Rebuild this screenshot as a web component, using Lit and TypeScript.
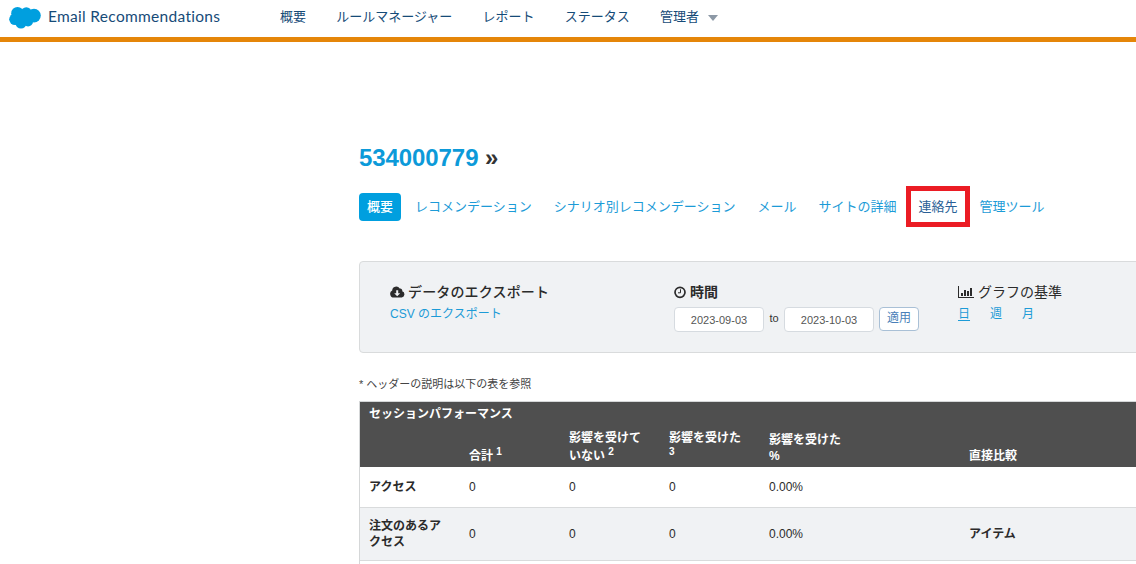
import { LitElement, html, css } from "lit";
import { customElement } from "lit/decorators.js";
import { classMap } from "lit/directives/class-map.js";

const NAV = ["概要", "ルールマネージャー", "レポート", "ステータス", "管理者"];
const TABS = [
  "概要",
  "レコメンデーション",
  "シナリオ別レコメンデーション",
  "メール",
  "サイトの詳細",
  "連絡先",
  "管理ツール",
];
const ROWS = [
  { label: ["アクセス"], compare: "" },
  { label: ["注文のあるア", "クセス"], compare: "アイテム" },
];

@customElement("app-header")
class AppHeader extends LitElement {
  static styles = css`
    :host { display: block; }
    .bar {
      display: flex;
      box-sizing: border-box;
      height: 42px;
      padding-left: 9px;
      border-bottom: 5px solid #e58609;
      background: #fff;
      color: #164b78;
      overflow: hidden;
    }
    .brand { display: flex; width: 271px; gap: 7px; }
    .logo { width: 32px; height: 23px; margin-top: 6px; flex: none; }
    .name {
      font: 15.5px/33px Lato, sans-serif;
      letter-spacing: 0.3px;
      white-space: nowrap;
    }
    .nav { display: flex; gap: 30.2px; font-size: 13px; line-height: 33px; }
    .item { display: flex; white-space: nowrap; }
    .caret { width: 10px; height: 6px; margin: 15px 0 0 9px; }
  `;
  render() {
    return html`<header class="bar">
      <div class="brand">
        <svg class="logo" viewBox="0 0 32 23" fill="#009fdf">
          <circle cx="8.5" cy="7.2" r="6.3" />
          <circle cx="17.3" cy="6.6" r="5.4" />
          <circle cx="25" cy="9.6" r="6.8" />
          <circle cx="6" cy="13.3" r="5.8" />
          <circle cx="12" cy="17" r="5.6" />
          <circle cx="19" cy="15.4" r="5" />
          <path d="M6 6h19v9H8z" />
        </svg>
        <span class="name">Email Recommendations</span>
      </div>
      <nav class="nav">
        ${NAV.map(
          (n, i) => html`<span class="item">${n}${i === NAV.length - 1
            ? html`<svg class="caret" viewBox="0 0 10 6"><path d="M0 0h10L5 6z" fill="#8d99a6" /></svg>`
            : ""}</span>`
        )}
      </nav>
    </header>`;
  }
}

@customElement("filter-panel")
class FilterPanel extends LitElement {
  static styles = css`
    :host { display: block; }
    .panel {
      display: grid;
      grid-template-columns: 284px 284px 284px;
      box-sizing: border-box;
      width: 915px;
      height: 92px;
      padding: 20px 30px 0;
      border: 1px solid #d9dbdc;
      border-radius: 4px;
      background: #f0f2f4;
    }
    .title {
      display: flex;
      align-items: center;
      height: 20px;
      font-size: 14px;
      line-height: 20px;
      font-weight: 500;
      color: #2b2b2b;
      white-space: nowrap;
    }
    .wide { letter-spacing: 0.15px; }
    .bold { font-weight: 700; }
    .light { font-weight: 400; }
    .icon { flex: none; height: 14px; }
    .cloud { width: 15px; margin-right: 3px; }
    .clock { width: 12px; margin-right: 4px; }
    .chart { width: 16px; margin-right: 4px; }
    .link { color: #1c9bd7; font-size: 12px; line-height: 24px; }
    .dates { display: flex; align-items: flex-start; padding-top: 5px; }
    .date {
      box-sizing: border-box;
      width: 90px;
      height: 25px;
      border: 1px solid #d6dbe0;
      border-radius: 4px;
      background: #fff;
      color: #555;
      font-size: 11px;
      line-height: 25px;
      text-align: center;
    }
    .to { width: 20px; text-align: center; font-size: 11px; line-height: 22px; color: #333; }
    .apply {
      box-sizing: border-box;
      width: 40px;
      height: 24px;
      margin-left: 5px;
      border: 1px solid #a9c0d6;
      border-radius: 4px;
      background: #fff;
      color: #4a7fb8;
      font-size: 12px;
      line-height: 20px;
      text-align: center;
    }
    .periods { display: flex; gap: 20px; }
    .current { text-decoration: underline; text-underline-offset: 2px; }
  `;
  render() {
    return html`<section class="panel">
      <div>
        <div class="title wide">
          <svg class="icon cloud" viewBox="0 0 15 14">
            <path
              fill="#2b2b2b"
              d="M3.8 12.5A3.7 3.7 0 0 1 2.2 5.5 4 4 0 0 1 9.7 3.6a2.1 2.1 0 0 1 2.5 2.7A3.2 3.2 0 0 1 11.8 12.5z"
            />
            <path fill="#f0f2f4" d="M6.2 5.2h2v3h2L7.2 11.2 4.2 8.2h2z" />
          </svg>
          <span>データのエクスポート</span>
        </div>
        <div class="link">CSV のエクスポート</div>
      </div>
      <div>
        <div class="title bold">
          <svg class="icon clock" viewBox="0 0 12 14" fill="none" stroke="#2b2b2b">
            <circle cx="6" cy="7.3" r="5" stroke-width="1.7" />
            <path d="M6.5 4.3v3.5H4" stroke-width="1" />
          </svg>
          <span>時間</span>
        </div>
        <div class="dates">
          <div class="date">2023-09-03</div>
          <div class="to">to</div>
          <div class="date">2023-10-03</div>
          <div class="apply">適用</div>
        </div>
      </div>
      <div>
        <div class="title light">
          <svg class="icon chart" viewBox="0 0 16 14" fill="#2b2b2b">
            <path d="M0 1h1v11h15v1H0zM3 8h2v3H3zM6 5h2v6H6zM9 6h2v5H9zM12 3h2v8h-2z" />
          </svg>
          <span>グラフの基準</span>
        </div>
        <div class="link periods"><span class="current">日</span><span>週</span><span>月</span></div>
      </div>
    </section>`;
  }
}

@customElement("session-table")
class SessionTable extends LitElement {
  static styles = css`
    :host { display: block; }
    .table {
      width: 915px;
      table-layout: fixed;
      border-collapse: separate;
      border-spacing: 0;
      border: 1px solid #d5d7d8;
      font-size: 12px;
      line-height: 16px;
      color: #2b2b2b;
    }
    .table th, .table td { padding: 0 0 0 9px; text-align: left; white-space: nowrap; }
    .label { width: 90px; }
    .num { width: 90px; }
    .head { background: #4f4f4f; color: #fff; vertical-align: bottom; }
    .table .heading { height: 20px; padding-bottom: 2px; vertical-align: bottom; }
    .table .cols th { height: 43px; padding-bottom: 3px; box-sizing: border-box; }
    .line { display: block; line-height: 16px; }
    .sup { font-size: 10px; line-height: 0; vertical-align: 5px; }
    .second { display: block; height: 19px; line-height: 19px; }
    .table .body td, .table .body th { height: 40px; border-bottom: 1px solid #d9dbdc; }
    .table .tall td, .table .tall th { height: 52px; background: #f0f2f4; }
    .table .rest td { height: 40px; }
  `;
  render() {
    return html`<table class="table">
      <colgroup>
        <col style="width:100px" /><col style="width:100px" /><col style="width:100px" />
        <col style="width:100px" /><col style="width:100px" /><col style="width:100px" />
        <col style="width:100px" /><col />
      </colgroup>
      <thead class="head">
        <tr><th class="heading" colspan="8">セッションパフォーマンス</th></tr>
        <tr class="cols">
          <th></th>
          <th>合計 <span class="sup">1</span></th>
          <th><span class="second">影響を受けて</span><span class="line">いない <span class="sup">2</span></span></th>
          <th><span class="second">影響を受けた</span><span class="line"><span class="sup">3</span></span></th>
          <th><span class="line">影響を受けた</span><span class="line">%</span></th>
          <th></th>
          <th>直接比較</th>
          <th></th>
        </tr>
      </thead>
      <tbody>
        ${ROWS.map(
          (r, i) => html`<tr class=${classMap({ body: true, tall: i % 2 === 1 })}>
            <th>${r.label.map((l) => html`<span class="line">${l}</span>`)}</th>
            <td>0</td><td>0</td><td>0</td><td>0.00%</td><td></td>
            <th>${r.compare}</th><td></td>
          </tr>`
        )}
        <tr class="rest"><td colspan="8"></td></tr>
      </tbody>
    </table>`;
  }
}

@customElement("app-root")
class AppRoot extends LitElement {
  static styles = css`
    :host {
      display: block;
      height: 564px;
      overflow: hidden;
      background: #fff;
      font-family: "Liberation Sans", "Noto Sans CJK JP", sans-serif;
    }
    .main { padding: 100px 0 0 359px; }
    .site { margin: 0; font-size: 24px; line-height: 32px; color: #333; letter-spacing: -0.08px; }
    .id { color: #0c9ad9; }
    .tabs {
      display: flex;
      gap: 6px;
      margin: 19px 0 40px;
      font-size: 13px;
      line-height: 27px;
      color: #1c9bd7;
    }
    .tab { position: relative; height: 28px; padding: 0 8px; white-space: nowrap; }
    .active { border-radius: 4px; background: #009fdf; color: #fff; font-weight: 500; }
    .marked { color: #2a5f96; }
    .frame {
      position: absolute;
      inset: -7px -4px -6px -5px;
      border: 5px solid #eb1c24;
    }
    .note { height: 16px; margin: 23px 0 9px; font-size: 11px; line-height: 16px; color: #444; white-space: nowrap; }
  `;
  render() {
    return html`<app-header></app-header>
      <main class="main">
        <h1 class="site"><span class="id">534000779</span> »</h1>
        <nav class="tabs">
          ${TABS.map(
            (t, i) => html`<span class=${classMap({ tab: true, active: i === 0, marked: i === 5 })}
              >${t}${i === 5 ? html`<span class="frame"></span>` : ""}</span
            >`
          )}
        </nav>
        <filter-panel></filter-panel>
        <p class="note">* ヘッダーの説明は以下の表を参照</p>
        <session-table></session-table>
      </main>`;
  }
}
